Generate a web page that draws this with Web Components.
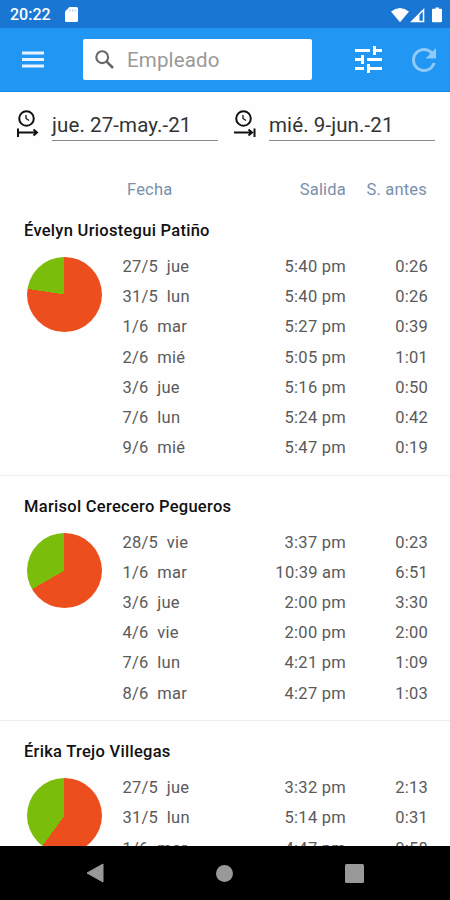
<!DOCTYPE html>
<html lang="es">
<head>
<meta charset="utf-8">
<title>Empleados</title>
<style>
    body {
        margin: 0;
        width: 450px;
        height: 900px;
        overflow: hidden;
        background: #fefefe;
        font-family: Roboto, sans-serif;
    }
</style>
</head>
<body>
<report-screen></report-screen>

<script>
class StatusBar extends HTMLElement {

    constructor() {
        super()
        this.shadow = this.attachShadow({ mode: 'open' })
    }

    connectedCallback() {
        this.render()
    }

    render() {
        this.shadow.innerHTML =
      /*html*/`
        <style>
            :host{
                display:flex;
                align-items:center;
                height:28px;
                box-sizing:border-box;
                padding:1px 8px 0 10px;
                background-color:#1976D2;
                color:#fff;
                font-size:16px;
                font-weight:500;
            }
            .card{
                margin-left:14px;
            }
            .signals{
                margin-left:auto;
            }
            svg{
                display:block;
                fill:#fff;
            }
        </style>
        <slot></slot>
        <svg class="card" width="13" height="15" viewBox="0 0 13 15">
            <path d="M4.5 0H11.5Q13 0 13 1.5V13.5Q13 15 11.5 15H1.5Q0 15 0 13.5V4.5Z"/>
            <path d="M4.5 2.5h1v2h-1zM7 2.5h1v2H7zM9.5 2.5h1v2h-1z" fill="#9cc5ee"/>
        </svg>
        <svg class="signals" width="51" height="16" viewBox="0 0 51 16">
            <path d="M0 4.5Q9 -2.5 18 4.5L9 15.3Z"/>
            <path fill-rule="evenodd" d="M33.3 1V15.3H19ZM31.8 4.6L28.5 8V13.8H31.8Z"/>
            <path d="M42.500 1.8h2V.5h3.5v1.3H50q1 0 1 1V14.3q0 1-1 1H42q-1 0-1-1V2.800q0-1 1-1Z"/>
        </svg>
      `
    }
}

class AppToolbar extends HTMLElement {

    constructor() {
        super()
        this.shadow = this.attachShadow({ mode: 'open' })
    }

    connectedCallback() {
        this.render()
    }

    render() {
        this.shadow.innerHTML =
      /*html*/`
        <style>
            :host{
                display:flex;
                align-items:center;
                height:64px;
                box-sizing:border-box;
                padding:0 14px 0 22px;
                background-color:#2196F3;
                border-bottom:1px solid #1b86df;
            }
            svg{
                display:block;
                flex:none;
            }
            .search{
                display:flex;
                align-items:center;
                box-sizing:border-box;
                width:229px;
                height:41px;
                margin-left:39px;
                padding-left:12px;
                gap:13px;
                background-color:#fff;
                border-radius:2px;
                color:#999;
                font-size:20.5px;
                letter-spacing:0.15px;
            }
            .search slot{
                display:block;
                padding-top:1px;
            }
            .tune{
                margin-left:43px;
            }
            .refresh{
                margin-left:30px;
            }
        </style>
        <svg width="22" height="17" viewBox="0 0 22 17" fill="#e6f3fe">
            <path d="M0 .5h22v3H0zM0 7h22v3H0zM0 13.500h22v3H0z"/>
        </svg>
        <div class="search">
            <svg width="19" height="19" viewBox="0 0 19 19" fill="none" stroke="#666" stroke-width="2.1">
                <circle cx="7.200" cy="7.200" r="5.900"/>
                <path d="M11.400 11.400L18 18" stroke-width="2.500"/>
            </svg>
            <slot></slot>
        </div>
        <svg class="tune" width="27" height="27" viewBox="0 0 18 18" fill="#fff">
            <path d="M0 14v2h6v-2H0zM0 2v2h10V2H0zm10 16v-2h8v-2h-8v-2H8v6h2zM4 6v2H0v2h4v2h2V6H4zm14 4V8H8v2h10zM12 6h2V4h4V2h-4V0h-2v6z"/>
        </svg>
        <svg class="refresh" width="24" height="24" viewBox="4 4 16 16" fill="#90CAF9">
            <path d="M17.650 6.350A7.958 7.958 0 0 0 12 4c-4.420 0-7.990 3.580-7.990 8s3.570 8 7.990 8c3.730 0 6.840-2.550 7.730-6h-2.080A5.990 5.990 0 0 1 12 18c-3.310 0-6-2.690-6-6s2.690-6 6-6c1.660 0 3.140.690 4.220 1.780L13 11h7V4l-2.350 2.350z"/>
        </svg>
      `
    }
}

class DateField extends HTMLElement {

    constructor() {
        super()
        this.shadow = this.attachShadow({ mode: 'open' })
    }

    connectedCallback() {
        this.render()
    }

    render() {
        // "from" starts at a bar, "to" ends at one
        const arrow = this.getAttribute('kind') === 'to'
            ? '<path d="M0 22.500H17M14.500 19.500L18 22.500L14.500 25.500M20.500 18.500V27" />'
            : '<path d="M1 18.500V27M1 22.500H19M16.500 19.500L20 22.500L16.500 25.500" />'
        this.shadow.innerHTML =
      /*html*/`
        <style>
            :host{
                display:flex;
                gap:13px;
            }
            svg{
                display:block;
                flex:none;
            }
            .value{
                flex:1;
                box-sizing:border-box;
                height:31px;
                border-bottom:1px solid #888;
                color:#333;
                font-size:20.5px;
                line-height:30px;
                letter-spacing:0.1px;
                white-space:nowrap;
            }
        </style>
        <svg width="22" height="28" viewBox="0 0 22 28" fill="none" stroke="#111" stroke-width="2">
            <circle cx="9.500" cy="8.500" r="7.300"/>
            <path d="M9 5V8.500L12 10.500" stroke-width="1.300"/>
            ${arrow}
        </svg>
        <div class="value"><slot></slot></div>
      `
    }
}

class EmployeeSection extends HTMLElement {

    constructor() {
        super()
        this.shadow = this.attachShadow({ mode: 'open' })
    }

    connectedCallback() {
        this.render()
    }

    render() {
        this.shadow.innerHTML =
      /*html*/`
        <style>
            :host{
                display:block;
                box-sizing:border-box;
                padding:20px 22px 11.4px 24px;
                border-bottom:1px solid #eee;
            }
            h2{
                margin:0;
                height:22px;
                line-height:22px;
                font-size:16.5px;
                font-weight:500;
                letter-spacing:0.28px;
                color:#111;
                white-space:nowrap;
            }
            .content{
                display:flex;
                padding-top:10px;
            }
            .pie{
                width:75px;
                height:75px;
                margin:5px 21px 0 2.500px;
                border-radius:50%;
                background:conic-gradient(#EC4F1D 0 calc(100% - var(--green)), #7ABD0A 0);
            }
            .rows{
                flex:1;
            }
        </style>
        <h2>${this.getAttribute('name')}</h2>
        <div class="content">
            <div class="pie" style="--green:${this.getAttribute('green')}"></div>
            <div class="rows"><slot></slot></div>
        </div>
      `
    }
}

class ExitRow extends HTMLElement {

    constructor() {
        super()
        this.shadow = this.attachShadow({ mode: 'open' })
    }

    connectedCallback() {
        this.render()
    }

    render() {
        this.shadow.innerHTML =
      /*html*/`
        <style>
            :host{
                display:grid;
                grid-template-columns:112px 111.5px 1fr;
                height:30.2px;
                line-height:30.2px;
                font-size:16.5px;
                letter-spacing:0.25px;
                color:#5a5a5a;
                white-space:pre;
            }
            .right{
                text-align:right;
            }
        </style><span>${this.getAttribute('day')}</span><span class="right">${this.getAttribute('out')}</span><span class="right">${this.getAttribute('early')}</span>`
    }
}

class NavBar extends HTMLElement {

    constructor() {
        super()
        this.shadow = this.attachShadow({ mode: 'open' })
    }

    connectedCallback() {
        this.render()
    }

    render() {
        this.shadow.innerHTML =
      /*html*/`
        <style>
            :host{
                display:flex;
                justify-content:space-between;
                align-items:center;
                height:54px;
                box-sizing:border-box;
                padding:0 86px 0 85.5px;
                background-color:#000;
            }
            svg{
                display:block;
                fill:#999;
            }
        </style>
        <svg width="18" height="20" viewBox="0 0 18 20"><path d="M17 1V19L1 10Z" stroke="#999" stroke-linejoin="round"/></svg>
        <svg width="18" height="18" viewBox="0 0 18 18"><circle cx="9.500" cy="9.500" r="8.500"/></svg>
        <svg width="19" height="19" viewBox="0 0 19 19"><rect width="19" height="19" rx="1.500"/></svg>
      `
    }
}

class ReportScreen extends HTMLElement {

    constructor() {
        super()
        this.shadow = this.attachShadow({ mode: 'open' })
    }

    connectedCallback() {
        this.render()
    }

    render() {
        this.shadow.innerHTML =
      /*html*/`
        <style>
            :host{
                display:flex;
                flex-direction:column;
                height:900px;
            }
            status-bar, app-toolbar, nav-bar{
                flex:none;
            }
            .dates{
                display:grid;
                grid-template-columns:201px 201px;
                gap:16px;
                padding:18px 15px 0 17px;
            }
            .head{
                display:grid;
                grid-template-columns:112px 107px 81px;
                padding:37px 23px 0 127px;
                height:22px;
                line-height:24px;
                font-size:16.5px;
                letter-spacing:0.2px;
                color:#7890AB;
            }
            .head span + span{
                text-align:right;
            }
            .list{
                flex:1;
                min-height:0;
                overflow:hidden;
            }
        </style>
        <status-bar>20:22</status-bar>
        <app-toolbar>Empleado</app-toolbar>
        <div class="dates">
            <date-field kind="from">jue. 27-may.-21</date-field>
            <date-field kind="to">mié. 9-jun.-21</date-field>
        </div>
        <div class="head"><span>Fecha</span><span>Salida</span><span>S. antes</span></div>
        <div class="list">
            <employee-section name="Évelyn Uriostegui Patiño" green="22.6%">
                <exit-row day="27/5  jue" out="5:40 pm" early="0:26"></exit-row>
                <exit-row day="31/5  lun" out="5:40 pm" early="0:26"></exit-row>
                <exit-row day="1/6  mar" out="5:27 pm" early="0:39"></exit-row>
                <exit-row day="2/6  mié" out="5:05 pm" early="1:01"></exit-row>
                <exit-row day="3/6  jue" out="5:16 pm" early="0:50"></exit-row>
                <exit-row day="7/6  lun" out="5:24 pm" early="0:42"></exit-row>
                <exit-row day="9/6  mié" out="5:47 pm" early="0:19"></exit-row>
            </employee-section>
            <employee-section name="Marisol Cerecero Pegueros" green="33.3%">
                <exit-row day="28/5  vie" out="3:37 pm" early="0:23"></exit-row>
                <exit-row day="1/6  mar" out="10:39 am" early="6:51"></exit-row>
                <exit-row day="3/6  jue" out="2:00 pm" early="3:30"></exit-row>
                <exit-row day="4/6  vie" out="2:00 pm" early="2:00"></exit-row>
                <exit-row day="7/6  lun" out="4:21 pm" early="1:09"></exit-row>
                <exit-row day="8/6  mar" out="4:27 pm" early="1:03"></exit-row>
            </employee-section>
            <employee-section name="Érika Trejo Villegas" green="40%">
                <exit-row day="27/5  jue" out="3:32 pm" early="2:13"></exit-row>
                <exit-row day="31/5  lun" out="5:14 pm" early="0:31"></exit-row>
                <exit-row day="1/6  mar" out="4:47 pm" early="0:58"></exit-row>
            </employee-section>
        </div>
        <nav-bar></nav-bar>
      `
    }
}

customElements.define('status-bar', StatusBar);
customElements.define('app-toolbar', AppToolbar);
customElements.define('date-field', DateField);
customElements.define('employee-section', EmployeeSection);
customElements.define('exit-row', ExitRow);
customElements.define('nav-bar', NavBar);
customElements.define('report-screen', ReportScreen);
</script>
</body>
</html>
